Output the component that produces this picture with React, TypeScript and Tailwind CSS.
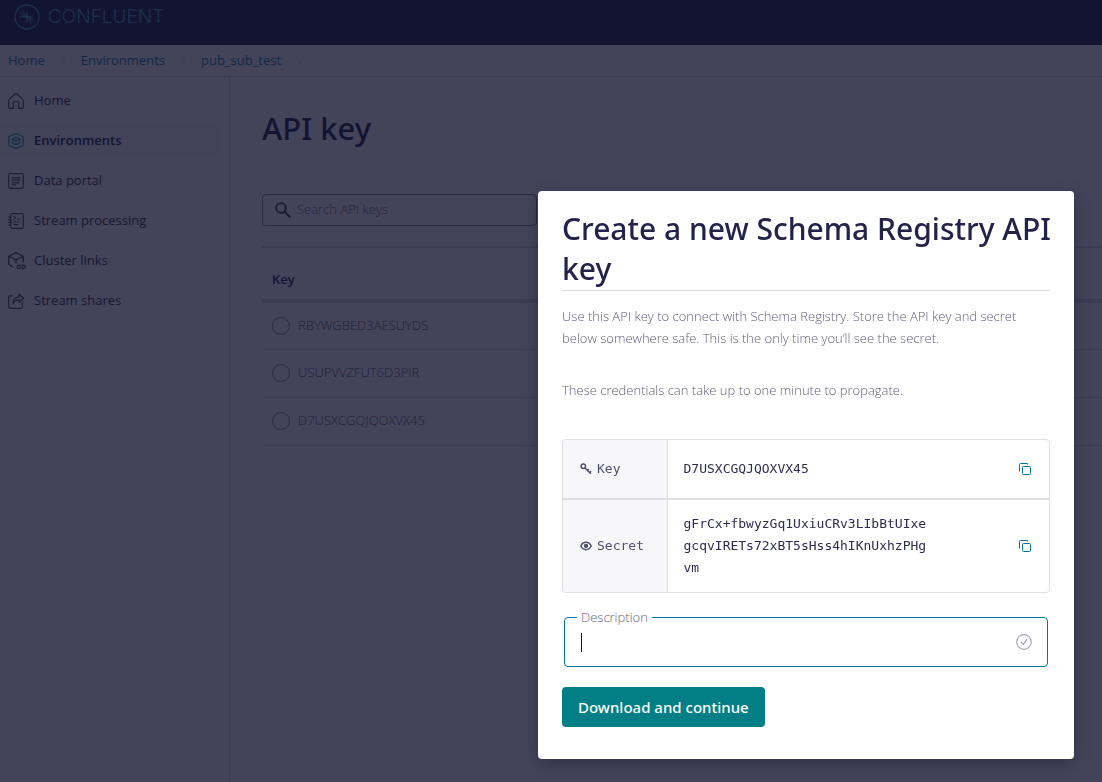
import React, { useState } from 'react';

interface IconProps {
  className?: string;
}

const Svg: React.FC<IconProps & { children: React.ReactNode }> = ({ className = 'size-4', children }) => (
  <svg
    viewBox="0 0 16 16"
    fill="none"
    stroke="currentColor"
    strokeWidth={1.2}
    strokeLinejoin="round"
    strokeLinecap="round"
    className={`shrink-0 ${className}`}
    aria-hidden="true"
  >
    {children}
  </svg>
);

const HomeIcon = () => (
  <Svg>
    <path d="M.7 7.2v7c0 .8.4 1.1 1.1 1.1h3.4V9.6c0-.6.3-.9.9-.9h3.8c.6 0 .9.3.9.9v5.7h3.4c.7 0 1.1-.3 1.1-1.1v-7c0-.5-.2-.9-.6-1.2L8.8 1c-.5-.4-1.1-.4-1.6 0L1.3 6c-.4.3-.6.7-.6 1.2Z" />
  </Svg>
);

const EnvironmentsIcon = () => (
  <Svg>
    <path d="M8 .6 14.2 3.3c.7.3 1.1.8 1.1 1.5v6.4c0 .7-.4 1.2-1.1 1.5L8 15.4l-6.2-2.7c-.7-.3-1.1-.8-1.1-1.5V4.8c0-.7.4-1.2 1.1-1.5L8 .6Z" />
    <path d="m8 4 3.6 1.700v4.5L8 12 4.400 10.200V5.700L8 4Zm0 3.700 3.600-2M8 7.700 4.400 5.700M8 7.700V12" />
  </Svg>
);

const PortalIcon = () => (
  <Svg>
    <rect x="0.7" y="0.7" width="14.6" height="14.6" rx="1.5" />
    <path d="M4 4.600h8M4 7.200h8M4 9.600h7M4 11.800h3.5" />
  </Svg>
);

const StreamIcon = () => (
  <Svg>
    <rect x="2.7" y="0.7" width="12.6" height="14.6" rx="1.5" />
    <path d="M.8 4h2M.8 6.700h2M.8 9.400h2M.8 12.100h2M5.800 3.400l1.800 1.500-1.800 1.500M9.500 6h2.500M6 9h6M6 11.700h4" />
  </Svg>
);

const LinksIcon = () => (
  <Svg className="size-[18px] -mr-0.5">
    <path d="M4.200 13.200 1.300 11.600C.8 11.300.6 11 .6 10.400V4.600c0-.5.2-.9.7-1.2L7.100.7l5.800 2.700c.5.3.7.7.7 1.200v4M.9 3.900l6.200 3.200 6.200-3.200M7.100 7.100v2.700" />
    <path d="M10.900 14.800H9.700a1.500 1.500 0 0 1 0-3.100h1.200M12.700 11.700h1.200a1.500 1.500 0 0 1 0 3.100h-1.200M10.400 13.250h2.800" />
  </Svg>
);

const SharesIcon = () => (
  <Svg>
    <path d="M4.700 2.800H2.200C1.200 2.800.7 3.300.7 4.300v9.500c0 1 .5 1.500 1.500 1.500h10.600c1 0 1.500-.5 1.500-1.500V9.200" />
    <path d="M5.300 10.800c-.6-4 1.500-6.700 5.800-6.900V1.200l4.400 4.100-4.400 4V6.800C8.300 6.800 6.300 8 5.300 10.800Z" />
  </Svg>
);

const CopyIcon = () => (
  <svg viewBox="0 0 14 14" fill="none" stroke="currentColor" className="size-3.5" aria-hidden="true">
    <rect x="4.5" y="4.5" width="8" height="8" rx="1" />
    <path d="M1.500 9.500v-7a1 1 0 0 1 1-1h7v1" />
  </svg>
);

const KeyIcon = () => (
  <svg viewBox="0 0 12 12" fill="none" stroke="currentColor" strokeWidth={1.5} className="size-3 shrink-0" aria-hidden="true">
    <circle cx="3.3" cy="3.3" r="2.2" />
    <path d="m5 5 5.800 5.800M7.300 7.800 8.900 6.200M9.400 9.900l1.700-1.700" />
  </svg>
);

const EyeIcon = () => (
  <svg viewBox="0 0 12 12" fill="none" stroke="currentColor" strokeWidth={1.5} className="size-3 shrink-0" aria-hidden="true">
    <path d="M.8 6C2 3.500 3.800 2.300 6 2.300S10 3.500 11.200 6C10 8.500 8.200 9.700 6 9.700S2 8.500.8 6Z" />
    <circle cx="6" cy="6" r="1.4" fill="currentColor" />
  </svg>
);

const Logo = () => (
  <svg viewBox="0 0 26 26" fill="none" stroke="currentColor" className="size-[26px]" aria-hidden="true">
    <circle cx="13" cy="13" r="12" strokeWidth={1.3} />
    <path d="M5.500 12.500 12 12l.9-6.500 1 6.600 6.600.9-6.600 1-.9 6.500-1-6.600-6.500-.7Z" fill="currentColor" stroke="none" />
    <path d="m11.500 11.500-3-6M11 11.500 6.500 7M11 12 5.500 9.500M14.500 14.500l3 6M15 14.500l4.500 4.500M15 14l5.500 2.500" strokeWidth={0.8} />
  </svg>
);

const NAV = [
  { label: 'Home', icon: HomeIcon },
  { label: 'Environments', icon: EnvironmentsIcon, active: true },
  { label: 'Data portal', icon: PortalIcon },
  { label: 'Stream processing', icon: StreamIcon },
  { label: 'Cluster links', icon: LinksIcon },
  { label: 'Stream shares', icon: SharesIcon },
];

const CRUMBS = ['Home', 'Environments', 'pub_sub_test'];

const KEYS = ['RBYWGBED3AESUYDS', 'USUPVVZFUT6D3PIR', 'D7USXCGQJQOXVX45'];

const CREDENTIALS = [
  { label: 'Key', icon: KeyIcon, value: 'D7USXCGQJQOXVX45', height: 'h-[59px]' },
  {
    label: 'Secret',
    icon: EyeIcon,
    value: 'gFrCx+fbwyzGq1UxiuCRv3LIbBtUIxegcqvIRETs72xBT5sHss4hIKnUxhzPHgvm',
    height: 'h-[93px]',
  },
];

const Sidebar = () => (
  <nav className="w-[230px] shrink-0 border-r border-[#d0d0da] pt-2 pr-2.5">
    <ul className="flex flex-col gap-2">
      {NAV.map(({ label, icon: Icon, active }) => (
        <li key={label}>
          <a
            href="#"
            className={`flex h-8 items-center gap-2.5 rounded-r pl-2 ${
              active ? 'bg-[#f9f9fb] font-semibold text-[#040531]' : 'text-[#171736]'
            }`}
          >
            <span className={active ? 'text-[#0090a0]' : 'text-[#38385a]'}>
              <Icon />
            </span>
            {label}
          </a>
        </li>
      ))}
    </ul>
  </nav>
);

const KeyList = () => {
  const [selected, setSelected] = useState('');

  return (
    <main className="min-w-0 flex-1 pt-[31px] pl-8">
      <h1 className="font-['Noto_Sans',sans-serif] text-[31px] leading-10 font-medium text-[#040531]">API key</h1>

      <label className="mt-[46px] flex h-8 w-[275px] items-center gap-1.5 rounded border border-[#7c7c92] pl-3">
        <svg viewBox="0 0 16 16" fill="none" stroke="currentColor" strokeWidth={1.8} className="size-4 shrink-0 text-[#171736]">
          <circle cx="6" cy="6" r="4.8" />
          <path d="m9.500 9.500 5.800 5.800" />
        </svg>
        <input
          type="search"
          aria-label="Search API keys"
          placeholder="Search API keys"
          className="w-full bg-transparent font-light outline-none placeholder:text-[#62627c]"
        />
      </label>

      <table className="mt-5 w-full border-t-2 border-[#d5d5e0] text-left">
        <thead>
          <tr className="h-[54px] border-b-4 border-[#d5d5e0]">
            <th className="pt-3 pl-2.5 font-semibold text-[#040531]">Key</th>
          </tr>
        </thead>
        <tbody>
          {KEYS.map((key) => (
            <tr key={key} className="h-12 border-b border-[#d5d5e0]">
              <td className="pl-2.5">
                <label className="flex items-center gap-2 font-light text-[#40405c]">
                  <input
                    type="radio"
                    name="api-key"
                    checked={selected === key}
                    onChange={() => setSelected(key)}
                    className="size-[18px] appearance-none rounded-full border border-[#80809a] checked:border-4"
                  />
                  {key}
                </label>
              </td>
            </tr>
          ))}
        </tbody>
      </table>
    </main>
  );
};

const CreateKeyModal = () => {
  const [description, setDescription] = useState('');

  return (
    <div className="fixed inset-0 flex items-start justify-end overflow-auto bg-[#181832]/81 px-7 pt-[191px]">
      <div
        role="dialog"
        aria-modal="true"
        aria-labelledby="modal-title"
        className="w-full max-w-[536px] rounded bg-white px-6 pt-[18px] pb-8 shadow-[0_4px_16px_rgba(20,20,45,0.4)]"
      >
        <div className="border-b border-[#dcdce6] pb-px">
          <h2
            id="modal-title"
            className="-mr-4 font-['Noto_Sans',sans-serif] text-[30px] leading-10 font-medium text-[#23234a]"
          >
            Create a new Schema Registry API key
          </h2>
        </div>
        <p className="mt-3.5 leading-[22px] font-light text-[#62627c]">
          Use this API key to connect with Schema Registry. Store the API key and secret below somewhere safe. This is the only
          time you’ll see the secret.
        </p>
        <p className="mt-[30px] leading-[22px] font-light text-[#62627c]">
          These credentials can take up to one minute to propagate.
        </p>

        <div className="mt-[38px] overflow-hidden rounded border border-[#dfdfe6] font-['DejaVu_Sans_Mono',monospace] text-[13px] leading-[22px]">
          <table className="w-full">
            <tbody>
              {CREDENTIALS.map(({ label, icon: Icon, value, height }) => (
                <tr key={label} className={`${height} border-[#dfdfe6] not-first:border-t-2`}>
                  <th scope="row" className="w-[104px] border-r border-[#dfdfe6] bg-[#f7f7fa] pl-[17px] text-left font-normal text-[#50506c]">
                    <span className="flex items-center gap-[5px]">
                      <Icon />
                      {label}
                    </span>
                  </th>
                  <td className="pl-4 text-[#2d2d50]">
                    <div className="w-[244px] break-all">{value}</div>
                  </td>
                  <td className="pr-[17px]">
                    <button type="button" aria-label={`Copy ${label.toLowerCase()}`} className="ml-auto block text-[#0074a2]">
                      <CopyIcon />
                    </button>
                  </td>
                </tr>
              ))}
            </tbody>
          </table>
        </div>

        <div className="relative mx-0.5 mt-6 flex h-[50px] items-center rounded border border-[#0074a2] pr-[15px] pl-4">
          <label htmlFor="description" className="absolute -top-3 left-3 bg-white px-1 leading-[22px] font-light text-[#62627c]">
            Description
          </label>
          {description === '' && <span className="h-[19px] w-px bg-[#111133]" />}
          <input
            id="description"
            type="text"
            value={description}
            onChange={(e) => setDescription(e.target.value)}
            className="min-w-0 flex-1 outline-none"
          />
          <Svg className="size-4 text-[#a8a8bc]">
            <circle cx="8" cy="8" r="7.3" />
            <path d="m5 8.400 2.300 2.200 3.500-5.200" />
          </Svg>
        </div>

        <button
          type="button"
          className="mt-5 h-10 rounded bg-[#007f86] px-4 font-['Noto_Sans',sans-serif] text-[15px] font-medium text-white"
        >
          Download and continue
        </button>
      </div>
    </div>
  );
};

export default function App() {
  return (
    <div className="flex min-h-screen flex-col bg-white font-['Open_Sans','Noto_Sans',sans-serif] text-[13px]">
      <header className="flex h-[45px] items-start gap-2 bg-[#040531] pt-1 pl-3.5 text-[#2ca0b4]">
        <Logo />
        <span className="font-[Inter,sans-serif] text-[19px] leading-[26px] font-light">CONFLUENT</span>
      </header>

      <nav aria-label="Breadcrumb" className="flex h-8 items-center border-b border-[#d0d0da] pl-2 text-[#0074a2]">
        {CRUMBS.map((crumb) => (
          <React.Fragment key={crumb}>
            <a href="#">{crumb}</a>
            <svg viewBox="0 0 6 10" fill="none" stroke="currentColor" className="mx-[15px] h-2.5 w-1.5 text-[#d5d5e0]">
              <path d="m1 .5 4 4.500-4 4.500" />
            </svg>
          </React.Fragment>
        ))}
      </nav>

      <div className="flex flex-1">
        <Sidebar />
        <KeyList />
      </div>

      <CreateKeyModal />
    </div>
  );
}
